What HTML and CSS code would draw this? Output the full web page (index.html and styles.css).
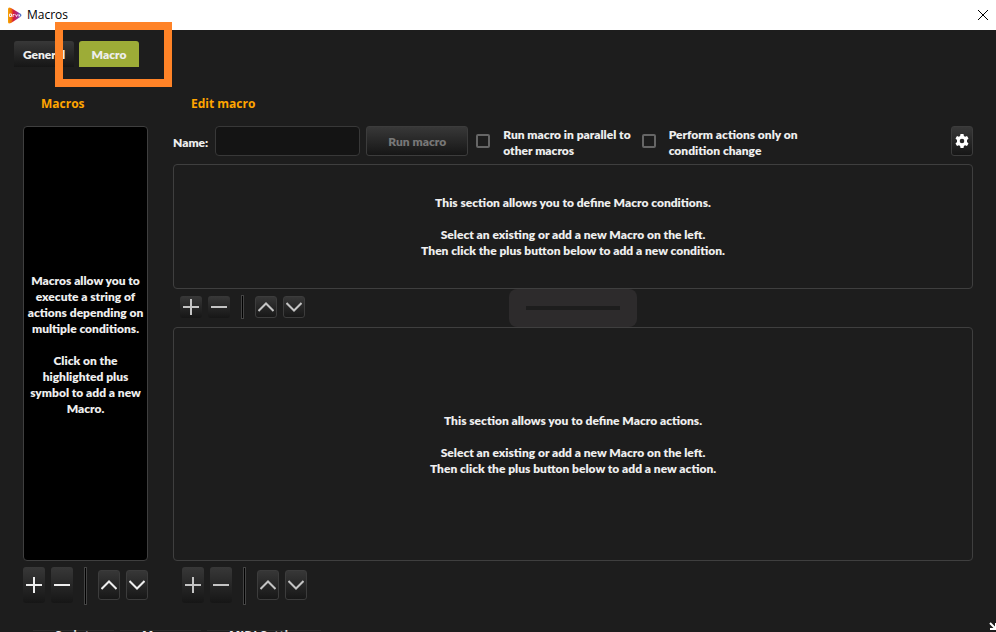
FILE: index.html
```html
<!DOCTYPE html>
<html lang="en">
<head>
<meta charset="UTF-8">
<meta name="viewport" content="width=device-width, initial-scale=1.0">
<title>Macros</title>
<link rel="stylesheet" href="styles.css">
</head>

<body>

<svg class="defs" aria-hidden="true">
<symbol id="plus" viewBox="0 0 16 16"><path d="M8 0v16M0 8h16"/></symbol>
<symbol id="minus" viewBox="0 0 16 16"><path d="M0 8h16"/></symbol>
<symbol id="up" viewBox="0 0 16 16"><path d="M0.500 12L8 4.500l7.500 7.500"/></symbol>
<symbol id="down" viewBox="0 0 16 16"><path d="M0.500 4L8 11.500 15.500 4"/></symbol>
</svg>

<header class="titlebar">
<svg class="logo" width="14" height="17" viewBox="0 0 14 17">
<defs>
<linearGradient id="logoFill">
<stop offset="0" stop-color="#f5a800"/>
<stop offset=".25" stop-color="#ee6a10"/>
<stop offset=".4" stop-color="#d81e3c"/>
<stop offset=".7" stop-color="#a8288c"/>
<stop offset="1" stop-color="#3c8cdc"/>
</linearGradient>
</defs>
<path d="M1 0.500L3 1L13 7Q14 8 13 9.500L3 16L1 16.500Q0 16 0 15V2Q0 1 1 0.500z" fill="url(#logoFill)"/>
<path d="M1.500 7h2v2.500h-2zM5 10V7.500h1.500M7.500 7.500L8.500 9.500l1-2M11 9.500v-2l1 2" fill="none" stroke="#fbe8f0" stroke-width="1"/>
</svg>
<h1>Macros</h1>
<button class="close" aria-label="Close">
<svg width="12" height="12" viewBox="0 0 12 12"><path d="M1 1l10 10M11 1L1 11"/></svg>
</button>
</header>

<nav class="tabs">
<button class="tab">General</button>
<button class="tab active">Macro</button>
<div class="highlight"></div>
</nav>

<main class="content">

<section class="sidebar">
<h2>Macros</h2>
<div class="macro-list">
<p>Macros allow you to execute a string of actions depending on multiple conditions.</p>
<p>Click on the highlighted plus symbol to add a new Macro.</p>
</div>
<div class="toolbar tall">
<button class="tool" aria-label="Add macro"><svg><use href="#plus"/></svg></button>
<button class="tool" aria-label="Remove macro"><svg><use href="#minus"/></svg></button>
<span class="divider"></span>
<button class="tool arrow" aria-label="Move macro up"><svg><use href="#up"/></svg></button>
<button class="tool arrow" aria-label="Move macro down"><svg><use href="#down"/></svg></button>
</div>
</section>

<section class="editor">
<h2>Edit macro</h2>

<div class="options">
<label for="name">Name:</label>
<input type="text" id="name" class="name">
<button class="run" disabled>Run macro</button>
<input type="checkbox" id="parallel" class="check">
<label for="parallel">Run macro in parallel to<br>other macros</label>
<input type="checkbox" id="change" class="check">
<label for="change">Perform actions only on<br>condition change</label>
<button class="settings" aria-label="Macro settings">
<svg width="14" height="14" viewBox="0 0 14 14">
<path fill-rule="evenodd" d="M5.500 0h3l.4 2 1.200.7 1.900-.7 1.500 2.600-1.500 1.300v2.200l1.500 1.300-1.500 2.600-1.900-.7-1.200.7-.4 2h-3l-.4-2-1.200-.7-1.900.7L.5 9.400 2 8.100V5.900L.5 4.600 2 2l1.900.7L5.100 2zM7 4.700a2.300 2.300 0 100 4.600 2.300 2.300 0 000-4.600z"/>
</svg>
</button>
</div>

<div class="panel conditions">
<p>This section allows you to define Macro conditions.</p>
<p>Select an existing or add a new Macro on the left.<br>Then click the plus button below to add a new condition.</p>
</div>

<div class="toolbar short">
<button class="tool" aria-label="Add condition"><svg class="dim"><use href="#plus"/></svg></button>
<button class="tool" aria-label="Remove condition"><svg class="dim"><use href="#minus"/></svg></button>
<span class="divider"></span>
<button class="tool arrow" aria-label="Move condition up"><svg class="dim"><use href="#up"/></svg></button>
<button class="tool arrow" aria-label="Move condition down"><svg class="dim"><use href="#down"/></svg></button>
<div class="splitter"></div>
</div>

<div class="panel actions">
<p>This section allows you to define Macro actions.</p>
<p>Select an existing or add a new Macro on the left.<br>Then click the plus button below to add a new action.</p>
</div>

<div class="toolbar tall inset">
<button class="tool" aria-label="Add action"><svg class="dim"><use href="#plus"/></svg></button>
<button class="tool" aria-label="Remove action"><svg class="dim"><use href="#minus"/></svg></button>
<span class="divider"></span>
<button class="tool arrow" aria-label="Move action up"><svg class="dim"><use href="#up"/></svg></button>
<button class="tool arrow" aria-label="Move action down"><svg class="dim"><use href="#down"/></svg></button>
</div>
</section>

</main>

<footer class="dock">
<span>Scripts</span>
<span>Macros</span>
<span class="wide">MIDI Settings</span>
</footer>

<svg class="grip" width="8" height="8" viewBox="0 0 8 8"><path d="M1 1l6 6M7 1v6H1"/></svg>

</body>
</html>
```
FILE: styles.css
```css
*{
    box-sizing:border-box;
}

body{
    margin:0;
    height:100vh;
    display:flex;
    flex-direction:column;
    overflow:hidden;
    background:#1d1d1d;
    color:#eee;
    font:800 12px/16px Lato, "Open Sans", sans-serif;
}

button,input{
    font:inherit;
    color:inherit;
    margin:0;
}

button{
    display:flex;
    align-items:center;
    justify-content:center;
    padding:0;
    border:1px solid #3c3c3c;
    border-radius:3px;
    background:linear-gradient(#383838,#161616);
}

h1,h2,p{
    margin:0;
}

svg{
    flex:none;
}

.defs{
    display:none;
}

/* title bar */
.titlebar{
    display:flex;
    align-items:center;
    height:30px;
    flex:none;
    padding:0 6px 0 8px;
    background:#fff;
    color:#000;
}

.titlebar h1{
    flex:1;
    margin-left:5px;
    font:400 12px/16px "Open Sans", sans-serif;
}

.close{
    width:14px;
    height:14px;
    border:none;
    background:none;
}

.close path{
    stroke:#000;
    stroke-width:1;
}

/* tabs */
.tabs{
    position:relative;
    display:flex;
    gap:5px;
    padding:11px 14px 0;
}

.tab{
    width:60px;
    height:26px;
    padding-top:2px;
    border:none;
    border-radius:3px 3px 0 0;
}

.tab.active{
    background:#9dac37;
}

.highlight{
    position:absolute;
    left:55px;
    top:-8px;
    width:117px;
    height:65px;
    border:8px solid #ff8327;
}

/* columns */
.content{
    flex:1;
    display:flex;
    gap:25px;
    padding:29px 23px 0;
}

.sidebar,.editor{
    display:flex;
    flex-direction:column;
}

.sidebar{
    width:125px;
}

.editor{
    flex:1;
}

h2{
    margin:0 18px 14px;
    color:#ffa500;
    font:700 12px/16px "Open Sans", sans-serif;
}

.macro-list,.panel{
    display:flex;
    flex-direction:column;
    justify-content:center;
    gap:16px;
    border:1px solid #3f3f3f;
    border-radius:4px;
    text-align:center;
}

.macro-list{
    flex:1;
    padding-top:2px;
    background:#000;
}

.conditions{
    height:125px;
}

.actions{
    flex:1;
    padding-top:2px;
}

/* options row */
.options{
    display:flex;
    align-items:center;
    height:30px;
    margin-bottom:8px;
}

label{
    padding-top:3px;
}

.name{
    width:145px;
    height:30px;
    margin:0 6px 0 7px;
    padding:0 6px;
    border:1px solid #383838;
    border-radius:4px;
    background:#141414;
}

.run{
    width:102px;
    height:30px;
    padding-top:2px;
    margin-right:8px;
    color:#777;
}

.check{
    appearance:none;
    width:14px;
    height:14px;
    margin-right:13px;
    border:2px solid #666;
    border-radius:2px;
}

label + .check{
    margin-left:11px;
}

.settings{
    width:22px;
    height:30px;
    margin-left:auto;
}

.settings path{
    fill:#fff;
}

/* button rows */
.toolbar{
    display:flex;
    align-items:center;
    gap:6px;
}

.tool{
    width:22px;
    border-color:transparent;
    background:linear-gradient(#383838,#161616) border-box;
}

.arrow{
    border-color:#3c3c3c;
}

.tool svg{
    width:16px;
    height:16px;
    fill:none;
    stroke:#eee;
    stroke-width:2;
}

.tool .dim{
    stroke:#c4c4c4;
}

.divider{
    width:3px;
    height:100%;
    margin:0 5px;
    border:1px solid #444;
    background:#000;
}

.tall{
    height:38px;
    margin-top:6px;
    padding-bottom:2px;
}

.tall .tool{
    height:36px;
}

.tall .arrow{
    height:30px;
}

.tall .divider{
    height:38px;
    align-self:flex-start;
}

.short{
    position:relative;
    height:38px;
    padding:0 7px 2px;
}

.short .tool{
    height:22px;
}

.short .divider{
    height:24px;
}

.inset{
    padding-left:9px;
}

.splitter{
    position:absolute;
    left:50%;
    top:0;
    width:128px;
    height:38px;
    margin-left:-64px;
    padding:17px;
    border-radius:8px;
    background:#2d2b2c;
}

.splitter::before{
    content:"";
    display:block;
    height:4px;
    background:#1d1d1d;
}

/* only the top edge of this row shows */
.dock{
    display:flex;
    gap:6px;
    height:2px;
    margin:25px 33px 0;
}

.dock span{
    flex:none;
    width:81px;
    height:24px;
    padding-left:22px;
    border-top:1px solid #2a2a2a;
    font:700 12px/10px "Open Sans", sans-serif;
}

.dock .wide{
    width:114px;
}

.grip{
    position:absolute;
    right:-1px;
    bottom:2px;
    fill:none;
    stroke:#fff;
    stroke-width:2;
}
```
